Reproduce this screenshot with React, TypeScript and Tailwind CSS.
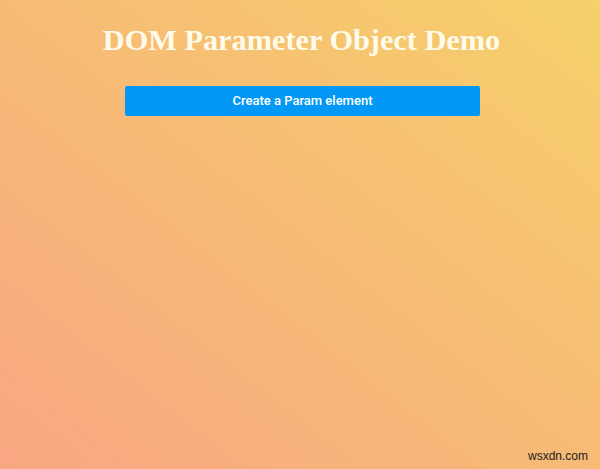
export default function App() {
  return (
    <div className="relative w-[600px] h-[469px] overflow-hidden bg-[linear-gradient(to_top_right,#f8a682,#f6d06a)]">
      {/* Heading */}
      <h1 className="pt-[22px] pl-[3px] text-center font-['Liberation_Serif',serif] text-[30.3px] font-bold leading-[36px] text-[#fffbeb]">
        DOM Parameter Object Demo
      </h1>

      {/* Action button */}
      <div className="mt-[28px] pl-[5px] flex justify-center">
        <button className="w-[355px] h-[30px] rounded-[2px] bg-[#0398f5] font-['Roboto',Arial,sans-serif] text-[13px] font-medium text-white">
          Create a Param element
        </button>
      </div>

      {/* Watermark */}
      <span className="absolute right-[12px] bottom-[4px] font-['Liberation_Sans',Arial,sans-serif] text-[12px] text-[#222]">
        wsxdn.com
      </span>
    </div>
  );
}
